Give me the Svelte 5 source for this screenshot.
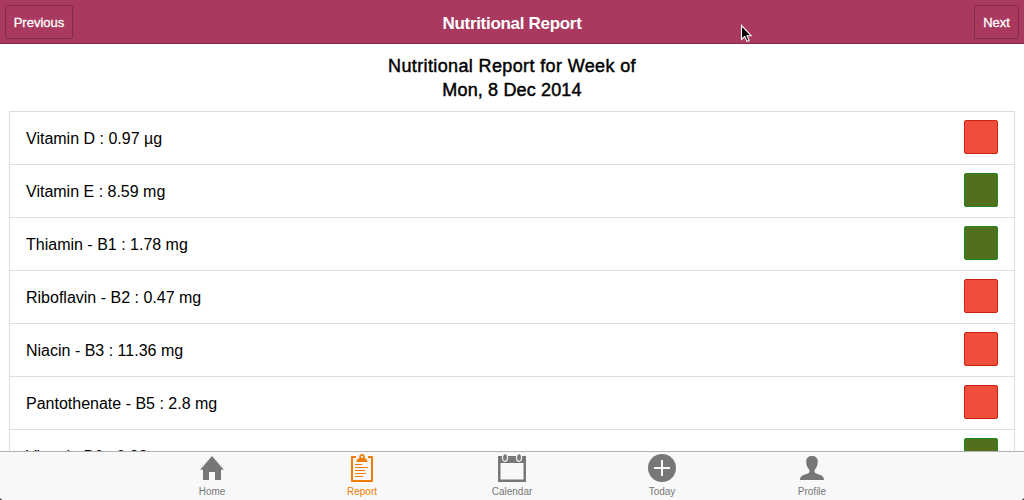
<script lang="ts">
  type Nutrient = { name: string; amount: string; ok: boolean };

  const nutrients: Nutrient[] = [
    { name: 'Vitamin D', amount: '0.97 µg', ok: false },
    { name: 'Vitamin E', amount: '8.59 mg', ok: true },
    { name: 'Thiamin - B1', amount: '1.78 mg', ok: true },
    { name: 'Riboflavin - B2', amount: '0.47 mg', ok: false },
    { name: 'Niacin - B3', amount: '11.36 mg', ok: false },
    { name: 'Pantothenate - B5', amount: '2.8 mg', ok: false },
    { name: 'Vitamin B6', amount: '0.98 mg', ok: true }
  ];

  const tabs = ['Home', 'Report', 'Calendar', 'Today', 'Profile'];
  let active = $state('Report');
</script>

<div class="app">
  <header class="bar">
    <button class="nav">Previous</button>
    <h1>Nutritional Report</h1>
    <button class="nav next">Next</button>
  </header>

  <main>
    <h2>Nutritional Report for Week of<br /><span>Mon, 8 Dec 2014</span></h2>
    <ul class="list">
      {#each nutrients as item}
        <li>
          <span>{item.name} : {item.amount}</span>
          <i class="status" class:ok={item.ok}></i>
        </li>
      {/each}
    </ul>
  </main>

  <nav class="tabs">
    {#each tabs as tab}
      <button class="tab" class:active={active === tab} onclick={() => (active = tab)}>
        <svg width="28" height="28" viewBox="0 0 28 28">
          {#if tab === 'Home'}
            <path fill="currentColor" d="M14 2 2.200 15.800H5V26h6v-8h6v8h6V15.800h2.800z" />
          {:else if tab === 'Report'}
            <path fill="none" stroke="currentColor" stroke-width="2" stroke-linejoin="round" d="M8 3H4v24h20V3h-4" />
            <path fill="currentColor" fill-rule="evenodd" d="M8.500 8c0-2.200 1-3.300 2.800-3.500V2.800C11.300 1 12.500 0 14 0s2.700 1 2.700 2.800v1.700c1.800.2 2.800 1.300 2.800 3.500zM14 1.700a1.100 1.100 0 1 0 0 2.200 1.100 1.100 0 0 0 0-2.200z" />
            <path fill="none" stroke="currentColor" stroke-width="1" d="M7 10.500h7M7 13.500h13M7 16.500h10M7 19.500h11M7 22.500h8" />
          {:else if tab === 'Calendar'}
            <path fill="currentColor" fill-rule="evenodd" d="M0 2h28v26H0zM2.500 9v16.500h23V9z" />
            <g fill="#777" stroke="#f8f8f8" stroke-width="1.200">
              <ellipse cx="7" cy="3.500" rx="2.500" ry="3.800" />
              <ellipse cx="21" cy="3.500" rx="2.500" ry="3.800" />
            </g>
          {:else if tab === 'Today'}
            <circle cx="14" cy="14" r="14" fill="currentColor" />
            <path stroke="#f8f8f8" stroke-width="2" d="M14 6v16M6 14h16" />
          {:else}
            <path fill="currentColor" d="M14 2c-3.500 0-5.800 2-5.800 5.600 0 3.400 1.200 6.300 3 8.200.8 1.800.2 3.200-1.500 3.800C6.200 20.900 2 21.700 2 26h24c0-4.300-4.200-5.100-7.700-6.400-1.700-.6-2.300-2-1.500-3.800 1.800-1.900 3-4.800 3-8.200C19.800 4 17.500 2 14 2z" />
          {/if}
        </svg>
        <span>{tab}</span>
      </button>
    {/each}
  </nav>

  <svg class="cursor" width="14" height="20" viewBox="0 0 14 20">
    <path d="M1.500 1.500v14l3.200-3 2.300 5 2.200-1-2.200-4.800h4.200z" fill="#000" stroke="#fff" stroke-width="1.100" />
  </svg>
  <i class="corner"></i>
  <i class="corner right"></i>
</div>

<style>
  :global(body) {
    background: #fff;
  }

  .app {
    position: relative;
    display: flex;
    flex-direction: column;
    height: 500px;
    overflow: hidden;
    font-family: 'Liberation Sans', Arial, sans-serif;
    color: #000;
  }

  button {
    font-family: inherit;
    cursor: pointer;
  }

  .bar {
    box-sizing: border-box;
    display: grid;
    grid-template-columns: 1fr auto 1fr;
    align-items: center;
    flex: none;
    height: 44px;
    padding: 0 5px;
    background: #a9395e;
    border-bottom: 1px solid #8a2b4c;
  }

  .bar h1 {
    margin: 4px 0 0;
    font-size: 17px;
    line-height: 24px;
    letter-spacing: -0.3px;
    color: #fff;
  }

  .nav {
    box-sizing: border-box;
    width: 68px;
    height: 34px;
    padding: 1px 0 0;
    background: transparent;
    border: 1px solid #842a49;
    border-radius: 2px;
    font-size: 13px;
    color: #fff;
    -webkit-text-stroke: 0.3px #fff;
  }

  .next {
    width: 45px;
    justify-self: end;
  }

  main {
    flex: 1;
    min-height: 0;
    padding: 10px 9px 0;
    overflow: hidden;
  }

  h2 {
    margin: 0 0 9px;
    font-size: 18px;
    font-weight: 400;
    line-height: 24px;
    letter-spacing: 0.37px;
    text-align: center;
    -webkit-text-stroke: 0.45px #000;
  }

  h2 span {
    letter-spacing: 0.15px;
  }

  .list {
    margin: 0;
    padding: 0;
    list-style: none;
    border: 1px solid #ddd;
  }

  .list li {
    box-sizing: border-box;
    display: flex;
    align-items: center;
    justify-content: space-between;
    height: 53px;
    padding: 0 16px;
    border-bottom: 1px solid #ddd;
    font-size: 16px;
  }

  .list span {
    padding-top: 2px;
  }

  .status {
    box-sizing: border-box;
    width: 34px;
    height: 34px;
    margin-bottom: 2px;
    background: #ef4e3a;
    border: 1px solid #cc2311;
    border-radius: 2px;
  }

  .status.ok {
    background: #526f1c;
    border-color: #1e8a1e;
  }

  .tabs {
    box-sizing: border-box;
    display: flex;
    justify-content: center;
    flex: none;
    height: 49px;
    background: #f8f8f8;
    border-top: 1px solid #b2b2b2;
  }

  .tab {
    display: flex;
    flex-direction: column;
    align-items: center;
    width: 150px;
    padding: 2px 0 0;
    background: none;
    border: 0;
    font-size: 10px;
    line-height: 12px;
    color: #777;
  }

  .tab svg {
    display: block;
    margin-bottom: 4px;
  }

  .tab.active {
    color: #ef7c00;
  }

  .cursor {
    position: absolute;
    left: 740px;
    top: 24px;
  }

  /* rounded window corners */
  .corner {
    position: absolute;
    left: 0;
    bottom: 0;
    width: 4px;
    height: 4px;
    background: radial-gradient(circle at 100% 0, transparent 4px, #444 4.500px);
  }

  .corner.right {
    right: 0;
    left: auto;
    background: radial-gradient(circle at 0 0, transparent 4px, #444 4.500px);
  }
</style>
